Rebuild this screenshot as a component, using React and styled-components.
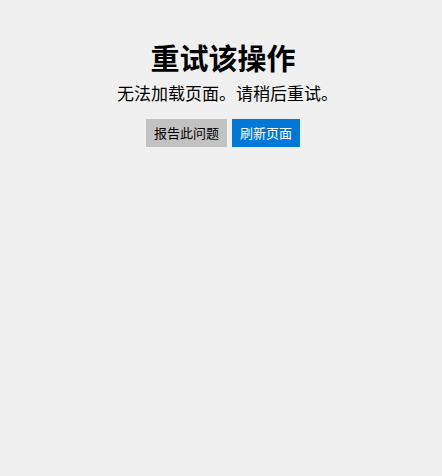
import React from 'react';
import styled, { createGlobalStyle } from 'styled-components';

const GlobalStyle = createGlobalStyle`
    html, body {
        margin: 0;
        padding: 0;
        background: #f0f0f0;
    }

    body {
        font-family: "Noto Sans CJK SC", "Noto Sans", sans-serif;
        color: #000;
    }
`;

const Page = styled.div`
    min-height: 476px;
    display: flex;
    flex-direction: column;
    align-items: center;
    padding: 39px 0 0 4px;
    box-sizing: border-box;
`;

const Title = styled.h1`
    margin: 0;
    font-size: 29px;
    font-weight: 700;
    line-height: 36px;
`;

const Message = styled.p`
    margin: 6px 0 0 9px;
    font-size: 17px;
    line-height: 24px;
`;

const Actions = styled.div`
    display: flex;
    gap: 5px;
    margin-top: 14px;
`;

const Button = styled.button`
    height: 28px;
    padding: 0 8px;
    border: none;
    border-radius: 0;
    font-family: inherit;
    font-size: 13px;
    line-height: 28px;
    background: ${props => props.primary ? '#0078d7' : '#c2c2c2'};
    color: ${props => props.primary ? '#fff' : '#000'};
    cursor: pointer;
`;

const App = () => (
    <>
        <GlobalStyle />
        <Page>
            <Title>重试该操作</Title>
            <Message>无法加载页面。请稍后重试。</Message>
            <Actions>
                <Button>报告此问题</Button>
                <Button primary>刷新页面</Button>
            </Actions>
        </Page>
    </>
);

export default App;
